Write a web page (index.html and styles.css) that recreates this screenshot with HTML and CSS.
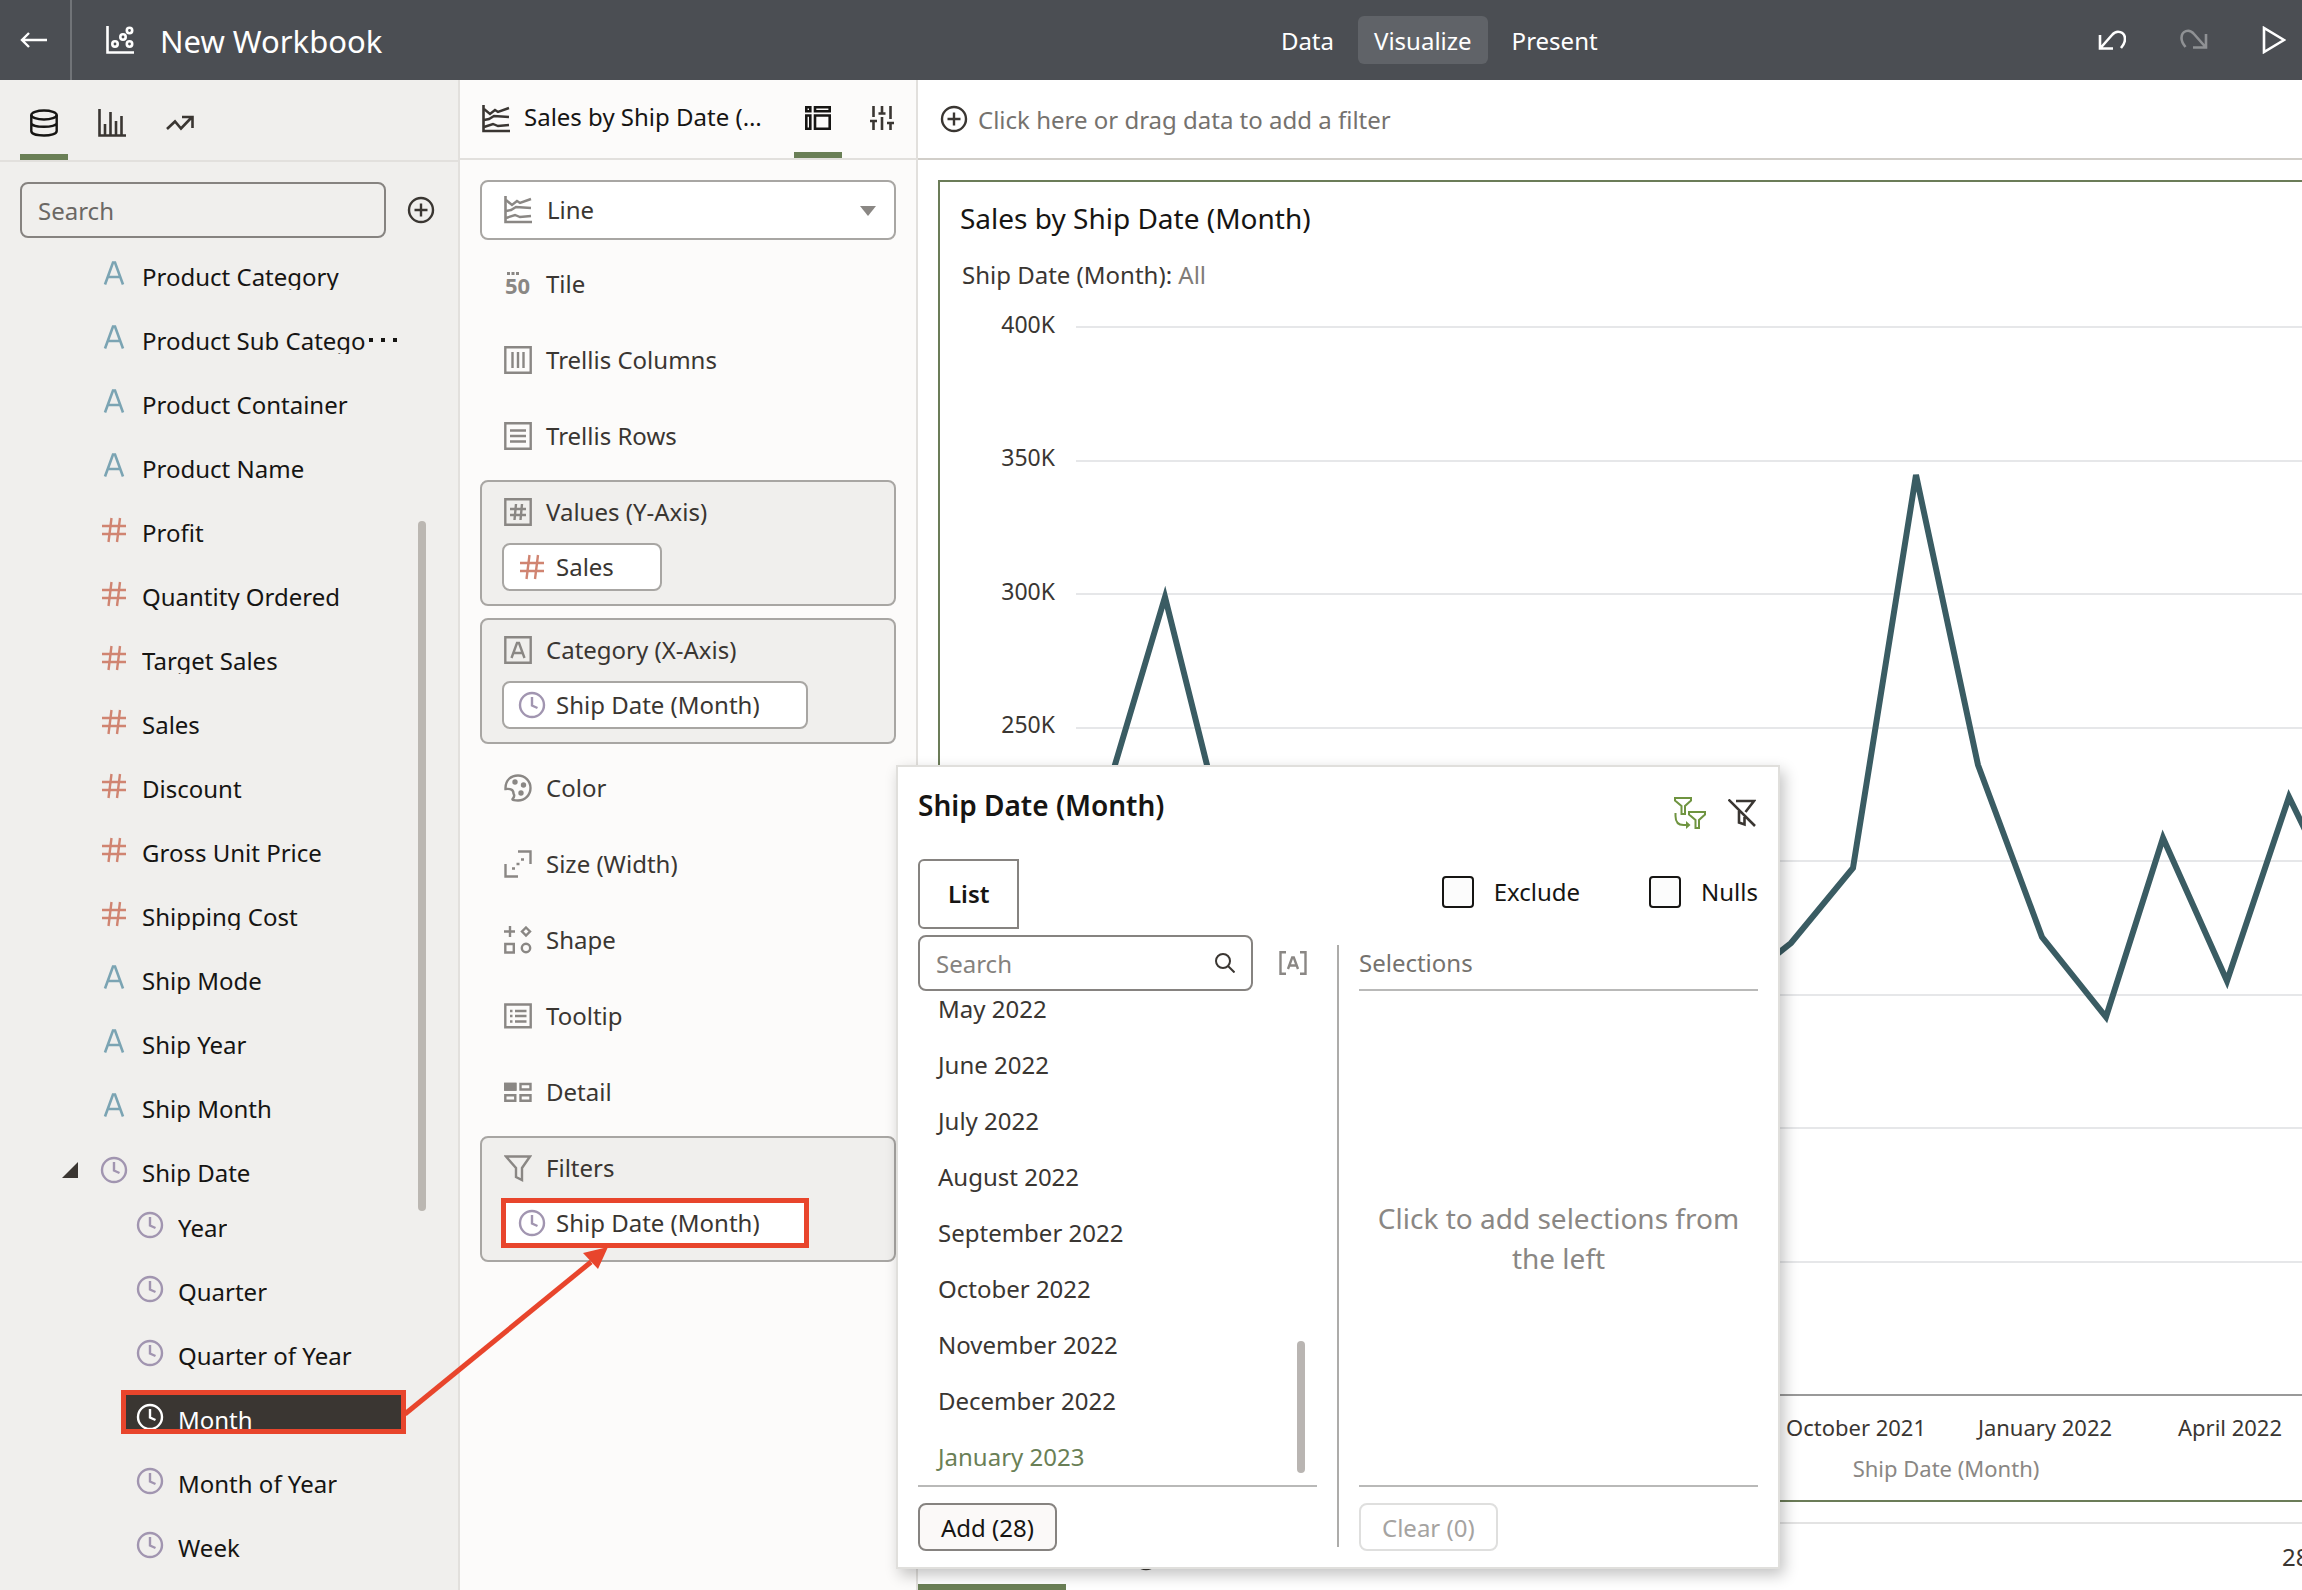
FILE: index.html
```html
<!DOCTYPE html>
<html lang="en">
<head>
<meta charset="utf-8">
<title>New Workbook</title>
<link rel="stylesheet" href="styles.css">
</head>
<body>
<svg class="sprite" aria-hidden="true">
  <symbol id="clock" viewBox="0 0 28 28"><circle cx="14" cy="14" r="12" fill="none" stroke="currentColor" stroke-width="2.4"/><path d="M14 6v8.500l5.500 2.500" fill="none" stroke="currentColor" stroke-width="2.400"/></symbol>
  <symbol id="attr" viewBox="0 0 28 28"><path d="M5 24.500L13 2.500h2L23 24.500M8 17h12" fill="none" stroke="currentColor" stroke-width="2.600"/></symbol>
  <symbol id="hash" viewBox="0 0 28 28"><path d="M2 10h24M2 18h24M11.500 2L8.500 26M20 2l-3 24" fill="none" stroke="currentColor" stroke-width="2.400"/></symbol>
  <symbol id="plus" viewBox="0 0 28 28"><circle cx="14" cy="14" r="12" fill="none" stroke="currentColor" stroke-width="2.400"/><path d="M14 7.500v13M7.500 14h13" stroke="currentColor" stroke-width="2.400"/></symbol>
  <symbol id="lines" viewBox="0 0 28 28"><path d="M1.500 0v26H28" fill="none" stroke="currentColor" stroke-width="2.600"/><path d="M2 4l6 5 5-4 3 2 11-4M2 15l5-1 5-3 15 1M2 22l9-3 5 2 11-1" fill="none" stroke="currentColor" stroke-width="2.400"/></symbol>
</svg>

<header class="topbar">
  <button class="topbar-back" aria-label="Back"><svg width="28" height="16" viewBox="0 0 28 16"><path d="M27 8H3M9 1L2 8l7 7" fill="none" stroke="currentColor" stroke-width="2.400"/></svg></button>
  <svg class="topbar-logo" width="28" height="28" viewBox="0 0 28 28" fill="none" stroke="currentColor" stroke-width="2.600"><path d="M1.500 0v26.500H28"/><circle cx="9" cy="18" r="2.700"/><circle cx="17" cy="11" r="2.700"/><circle cx="23.500" cy="4.500" r="2.700"/><circle cx="23.500" cy="18" r="2.700"/></svg>
  <h1 class="topbar-title">New Workbook</h1>
  <nav class="modes">
    <button class="mode">Data</button>
    <button class="mode mode--active">Visualize</button>
    <button class="mode">Present</button>
  </nav>
  <div class="topbar-actions">
    <button aria-label="Undo"><svg width="28" height="22" viewBox="0 0 28 22" fill="none" stroke="currentColor" stroke-width="2.600"><path d="M2 6v13.500h13M2.500 19L14 6c5-6 13-3 13 4 0 3-1.500 6-4 9"/></svg></button>
    <button class="is-off" aria-label="Redo"><svg width="28" height="22" viewBox="0 0 28 22" fill="none" stroke="currentColor" stroke-width="2.600"><path d="M26 5v13.500H13M25.500 18L14 5C9-1 1.500 2 1.500 9c0 3 1.500 6 4 9"/></svg></button>
    <button aria-label="Preview"><svg width="24" height="28" viewBox="0 0 24 28"><path d="M2 2v24L22 14z" fill="none" stroke="currentColor" stroke-width="2.600"/></svg></button>
  </div>
</header>

<div class="workspace">
  <aside class="data-panel">
    <div class="data-tabs">
      <button class="tab tab--active" aria-label="Data"><svg width="28" height="28" viewBox="0 0 28 28" fill="none" stroke="currentColor" stroke-width="2.400"><ellipse cx="14" cy="6" rx="12.700" ry="4.500"/><path d="M1.300 6v16c0 6 25.400 6 25.400 0V6M1.300 14c0 5 25.400 5 25.400 0"/></svg></button>
      <button class="tab" aria-label="Visualizations"><svg width="28" height="28" viewBox="0 0 28 28" fill="none" stroke="currentColor" stroke-width="2.600"><path d="M1.500 0v26.500H28M7 26V15M12.500 26V3M18 26V12M23.500 26V7"/></svg></button>
      <button class="tab" aria-label="Analytics"><svg width="28" height="28" viewBox="0 0 28 28" fill="none" stroke="currentColor" stroke-width="2.600"><path d="M1 20l8-7.500 6 7L26 8M16 8h10.500v11"/></svg></button>
    </div>
    <div class="data-search">
      <input class="field" type="text" placeholder="Search" aria-label="Search data">
      <button aria-label="Add data"><svg width="28" height="28"><use href="#plus"/></svg></button>
    </div>
    <ul class="tree">
      <li class="tree-row"><svg class="ic attr"><use href="#attr"/></svg><span class="tree-label">Product Category</span></li>
      <li class="tree-row"><svg class="ic attr"><use href="#attr"/></svg><span class="tree-label">Product Sub Catego</span><svg class="more" viewBox="0 0 30 4"><path d="M1 0h4v4H1zM13 0h4v4h-4zM25 0h4v4h-4z" fill="currentColor"/></svg></li>
      <li class="tree-row"><svg class="ic attr"><use href="#attr"/></svg><span class="tree-label">Product Container</span></li>
      <li class="tree-row"><svg class="ic attr"><use href="#attr"/></svg><span class="tree-label">Product Name</span></li>
      <li class="tree-row"><svg class="ic meas"><use href="#hash"/></svg><span class="tree-label">Profit</span></li>
      <li class="tree-row"><svg class="ic meas"><use href="#hash"/></svg><span class="tree-label">Quantity Ordered</span></li>
      <li class="tree-row"><svg class="ic meas"><use href="#hash"/></svg><span class="tree-label">Target Sales</span></li>
      <li class="tree-row"><svg class="ic meas"><use href="#hash"/></svg><span class="tree-label">Sales</span></li>
      <li class="tree-row"><svg class="ic meas"><use href="#hash"/></svg><span class="tree-label">Discount</span></li>
      <li class="tree-row"><svg class="ic meas"><use href="#hash"/></svg><span class="tree-label">Gross Unit Price</span></li>
      <li class="tree-row"><svg class="ic meas"><use href="#hash"/></svg><span class="tree-label">Shipping Cost</span></li>
      <li class="tree-row"><svg class="ic attr"><use href="#attr"/></svg><span class="tree-label">Ship Mode</span></li>
      <li class="tree-row"><svg class="ic attr"><use href="#attr"/></svg><span class="tree-label">Ship Year</span></li>
      <li class="tree-row"><svg class="ic attr"><use href="#attr"/></svg><span class="tree-label">Ship Month</span></li>
      <li>
        <div class="tree-row tree-row--open"><svg class="twisty" viewBox="0 0 16 16"><path d="M16 0v16H0z" fill="currentColor"/></svg><svg class="ic time"><use href="#clock"/></svg><span class="tree-label">Ship Date</span></div>
        <ul class="subtree">
          <li class="subrow"><svg class="ic time"><use href="#clock"/></svg><span class="tree-label">Year</span></li>
          <li class="subrow"><svg class="ic time"><use href="#clock"/></svg><span class="tree-label">Quarter</span></li>
          <li class="subrow"><svg class="ic time"><use href="#clock"/></svg><span class="tree-label">Quarter of Year</span></li>
          <li class="subrow subrow--selected"><svg class="ic time"><use href="#clock"/></svg><span class="tree-label">Month</span></li>
          <li class="subrow"><svg class="ic time"><use href="#clock"/></svg><span class="tree-label">Month of Year</span></li>
          <li class="subrow"><svg class="ic time"><use href="#clock"/></svg><span class="tree-label">Week</span></li>
        </ul>
      </li>
    </ul>
    <div class="tree-thumb"></div>
  </aside>

  <section class="grammar">
    <div class="grammar-head">
      <svg width="28" height="28"><use href="#lines"/></svg>
      <h2 class="grammar-title">Sales by Ship Date (Month)</h2>
      <button class="tab tab--active" aria-label="Grammar"><svg width="28" height="28" viewBox="0 0 28 28" fill="none" stroke="currentColor" stroke-width="2.600"><path d="M2.300 3.300h4v4h-4zM11 3.300h14.700v4H11zM2.300 11.500h4v13.200h-4zM11 11.500h14.700v13.200H11z"/></svg></button>
      <button class="tab tab--plain" aria-label="Properties"><svg width="24" height="24" viewBox="0 0 24 24" fill="none" stroke="currentColor" stroke-width="2.600"><path d="M3.500 0v11M12 0v7M20.500 0v13M3.500 14v10M12 11v13M20.500 17v7M0 15h7M8.500 7.500h7M17 17h7"/></svg></button>
    </div>
    <div class="grammar-body">
      <div class="viz-type">
        <svg class="viz-icon" width="28" height="28"><use href="#lines"/></svg>
        <select class="viz-select" aria-label="Visualization type"><option>Line</option></select>
        <svg class="viz-caret" viewBox="0 0 16 10"><path d="M0 0h16L8 10z" fill="currentColor"/></svg>
      </div>
      <div class="slot"><div class="slot-label"><svg class="ic" viewBox="0 0 28 28"><path d="M3 2h3v3H3zM7.500 2h3v3h-3zM12 2h3v3h-3z" fill="currentColor"/><text x="1" y="24" class="fifty">50</text></svg>Tile</div></div>
      <div class="slot"><div class="slot-label"><svg class="ic line-ic" viewBox="0 0 28 28"><path d="M1.300 1.300h25.400v25.400H1.300zM8.500 6v16M14 6v16M19.500 6v16"/></svg>Trellis Columns</div></div>
      <div class="slot"><div class="slot-label"><svg class="ic line-ic" viewBox="0 0 28 28"><path d="M1.300 1.300h25.400v25.400H1.300zM6 8.500h16M6 14h16M6 19.500h16"/></svg>Trellis Rows</div></div>
      <div class="slot slot--filled">
        <div class="slot-label"><svg class="ic line-ic" viewBox="0 0 28 28"><path d="M1.300 1.300h25.400v25.400H1.300zM6 11h16M6 17h16M12 6l-1.500 16M18 6l-1.500 16"/></svg>Values (Y-Axis)</div>
        <button class="pill"><svg class="ic meas"><use href="#hash"/></svg>Sales</button>
      </div>
      <div class="slot slot--filled">
        <div class="slot-label"><svg class="ic line-ic" viewBox="0 0 28 28"><path d="M1.300 1.300h25.400v25.400H1.300zM7.500 22L13 7h2l5.500 15M10 17h8"/></svg>Category (X-Axis)</div>
        <button class="pill"><svg class="ic time"><use href="#clock"/></svg>Ship Date (Month)</button>
      </div>
      <div class="slot"><div class="slot-label"><svg class="ic" viewBox="0 0 28 28"><path d="M1.500 14C1.500 6 7 1.500 14 1.500S26.500 7 26.500 14 21 26.500 14 26.500c-3 0-6-.5-5.500-1.500 2-2 2-4 1-5.500 0-4-3-5-8-4.500z" fill="none" stroke="currentColor" stroke-width="2.400"/><circle cx="11" cy="8" r="2.700" fill="currentColor"/><circle cx="19.500" cy="11" r="2.700" fill="currentColor"/><circle cx="17" cy="19" r="2.700" fill="currentColor"/></svg>Color</div></div>
      <div class="slot"><div class="slot-label"><svg class="ic line-ic" viewBox="0 0 28 28"><path d="M14 1.500h12.500V14M1.500 14v12.500H14"/><path d="M8 18.500h3M12.500 14h3M17 9.500h3"/></svg>Size (Width)</div></div>
      <div class="slot"><div class="slot-label"><svg class="ic line-ic" viewBox="0 0 28 28"><path d="M6 0v11M0 5.500h11M22 1.500l4 4-4 4-4-4zM1.300 18h8.500v8.500H1.300z"/><circle cx="22" cy="22" r="4.200"/></svg>Shape</div></div>
      <div class="slot"><div class="slot-label"><svg class="ic line-ic" viewBox="0 0 28 28"><path d="M1.300 2.500h25.400v22.800H1.300zM6 9h2.500M11 9h11.500M6 14h2.500M11 14h11.500M6 19.500h2.500M11 19.500h11.500"/></svg>Tooltip</div></div>
      <div class="slot"><div class="slot-label"><svg class="ic line-ic" viewBox="0 0 28 28"><path d="M1.300 6h10v5.500h-10zM16.500 6h10v5.500h-10zM1.300 17.200h10v5.500h-10zM16.500 17.200h10v5.500h-10z"/><path d="M1.300 6h10v5.500h-10z" fill="currentColor"/></svg>Detail</div></div>
      <div class="slot slot--filled">
        <div class="slot-label"><svg class="ic line-ic" viewBox="0 0 28 28"><path d="M2 2.500h24l-8 11.500v12l-6-3v-9z"/></svg>Filters</div>
        <button class="pill pill--marked"><svg class="ic time"><use href="#clock"/></svg>Ship Date (Month)</button>
      </div>
    </div>
  </section>

  <main class="canvas">
    <button class="filter-bar"><svg width="28" height="28"><use href="#plus"/></svg><span>Click here or drag data to add a filter</span></button>
    <div class="canvas-body">
      <article class="chart-card">
        <h2 class="chart-title">Sales by Ship Date (Month)</h2>
        <p class="chart-sub">Ship Date (Month): <span>All</span></p>
        <svg class="chart" width="100%" height="1196" role="img" aria-label="Sales by month line chart">
          <g class="gridlines">
            <line x1="136" x2="100%" y1="21" y2="21"/><line x1="136" x2="100%" y1="155" y2="155"/><line x1="136" x2="100%" y1="288" y2="288"/><line x1="136" x2="100%" y1="422" y2="422"/><line x1="136" x2="100%" y1="555" y2="555"/><line x1="136" x2="100%" y1="689" y2="689"/><line x1="136" x2="100%" y1="822" y2="822"/><line x1="136" x2="100%" y1="956" y2="956"/>
          </g>
          <line class="axis" x1="136" x2="100%" y1="1089" y2="1089"/>
          <g class="tick tick--y"><text x="115" y="27">400K</text><text x="115" y="160">350K</text><text x="115" y="294">300K</text><text x="115" y="427">250K</text></g>
          <g class="tick tick--x"><text x="916" y="1130">October 2021</text><text x="1105" y="1130">January 2022</text><text x="1290" y="1130">April 2022</text></g>
          <text class="axis-title" x="1006" y="1171">Ship Date (Month)</text>
          <polyline class="series" points="163,499 225,291 287,539 349,600 790,686 851,637 913,562 976,169 1038,459 1102,631 1166,711 1223,532 1287,675 1349,491 1412,620"/>
        </svg>
      </article>
    </div>
    <footer class="canvas-tabs">
      <button class="canvas-tab" aria-label="Canvas 1"></button>
      <button class="canvas-add" aria-label="Add canvas"><svg width="28" height="28"><use href="#plus"/></svg></button>
      <span class="row-count">28 Rows</span>
    </footer>
  </main>
</div>

<section class="popup" role="dialog" aria-labelledby="popup-title">
  <div class="popup-head">
    <h2 class="popup-title" id="popup-title">Ship Date (Month)</h2>
    <div class="popup-tools">
      <button class="limit" aria-label="Limit values"><svg width="32" height="32" viewBox="0 0 32 32" fill="none" stroke="currentColor" stroke-width="2"><path d="M1 1h16v2.500L11 9v8H7.500V9L1 3.500zM15 15h16v2.500L25 23v8h-3.500v-8L15 17.500zM1.500 16v3c0 6 3 9 8 9h4"/><path d="M12 24l4.500 4-4.500 4z" fill="currentColor" stroke="none"/></svg></button>
      <button aria-label="Clear filter"><svg width="28" height="28" viewBox="0 0 28 28" fill="none" stroke="currentColor" stroke-width="2.600"><path d="M.5.500L27 27M8 2h18l-8.500 11M11 12v11.500l5.500 2V18"/></svg></button>
    </div>
  </div>
  <div class="popup-mode">
    <button class="list-tab">List</button>
    <label class="check"><input type="checkbox">Exclude</label>
    <label class="check"><input type="checkbox">Nulls</label>
  </div>
  <div class="popup-cols">
    <div class="col">
      <div class="col-search">
        <div class="search-wrap">
          <input class="field" type="text" placeholder="Search" aria-label="Search values">
          <svg class="lens" viewBox="0 0 20 20" fill="none" stroke="currentColor" stroke-width="2"><circle cx="8" cy="8" r="7"/><path d="M13 13l6.500 6.500"/></svg>
        </div>
        <button class="match" aria-label="Match case"><svg width="28" height="24" viewBox="0 0 28 24" fill="none" stroke="currentColor" stroke-width="2.400"><path d="M7 1.200H1.500v21.600H7M21 1.200h5.500v21.600H21M9 18l4.200-11.500h1.600L19 18M11 14.500h6"/></svg></button>
      </div>
      <ul class="values">
        <li>May 2022</li><li>June 2022</li><li>July 2022</li><li>August 2022</li><li>September 2022</li><li>October 2022</li><li>November 2022</li><li>December 2022</li><li class="out">January 2023</li>
      </ul>
      <div class="values-thumb"></div>
      <button class="btn">Add (28)</button>
    </div>
    <div class="divider"></div>
    <div class="col">
      <h3 class="sel-head">Selections</h3>
      <div class="sel-empty">Click to add selections from the left</div>
      <button class="btn" disabled>Clear (0)</button>
    </div>
  </div>
</section>

<svg class="callout" width="220" height="180" viewBox="0 0 220 180" aria-hidden="true"><path d="M4 174L190 22" stroke="#e8452c" stroke-width="5"/><path d="M207 7l-10 22-15-16z" fill="#e8452c"/></svg>
</body>
</html>
```
FILE: styles.css
```css
* { box-sizing: border-box; margin: 0; padding: 0; }

body {
  position: relative;
  display: flex;
  flex-direction: column;
  height: 100vh;
  overflow: hidden;
  background: #fff;
  color: #161513;
  font: 24px/32px "Noto Sans", sans-serif;
}

button, input, select { font: inherit; color: inherit; }
button { display: flex; align-items: center; background: none; border: 0; white-space: nowrap; }
h1, h2, h3 { font-weight: 400; font-size: inherit; }
ul { list-style: none; }
svg { flex: none; display: block; }
.sprite { position: absolute; width: 0; height: 0; }
.ic { width: 28px; height: 28px; }
.attr { color: #7ba4b3; }
.meas { color: #d08471; }
.time { color: #a195b0; }

/* Top bar */
.topbar {
  flex: none;
  display: grid;
  grid-template-columns: 72px 28px 22fr auto 13fr;
  align-items: center;
  height: 80px;
  background: #4b4e53;
  color: #fff;
}
.topbar-back { height: 80px; padding-left: 20px; border-right: 2px solid #717478; }
.topbar-logo { margin-left: 34px; }
.topbar-title { padding: 2px 0 0 60px; font-size: 31px; line-height: 44px; }
.modes { display: flex; gap: 8px; }
.mode { height: 48px; padding: 2px 16px 0; border-radius: 6px; }
.mode--active { background: #606368; }
.topbar-actions { display: flex; justify-content: flex-end; align-items: center; gap: 54px; padding-right: 16px; }
.is-off { color: #8f9194; }

.workspace { flex: 1; min-height: 0; display: grid; grid-template-columns: 460px 458px minmax(0, 1fr); }

/* Data panel */
.data-panel { position: relative; overflow: hidden; background: #f0efed; border-right: 2px solid #e2e0dd; }
.data-tabs { display: flex; gap: 20px; height: 82px; padding-left: 20px; border-bottom: 2px solid #e2e0dd; }
.tab { justify-content: center; width: 48px; height: 80px; padding-top: 12px; color: #3a3632; border-bottom: 6px solid transparent; }
.tab--active { color: #161513; border-color: #6a7f56; }
.data-search { display: flex; align-items: center; gap: 21px; padding: 20px 23px 0 20px; color: #3a3632; }
.field {
  flex: 1;
  min-width: 0;
  width: 100%;
  height: 56px;
  padding: 0 16px;
  background: transparent;
  border: 2px solid #868380;
  border-radius: 8px;
}
.field::placeholder { color: #6b6864; opacity: 1; }
.tree { margin-top: 4px; }
.tree-row { display: flex; align-items: center; gap: 14px; height: 64px; padding-left: 100px; }
.tree-row--open { padding-left: 62px; }
.twisty { width: 16px; height: 16px; margin-right: 8px; color: #3a3632; }
.tree-label { padding-top: 6px; overflow: hidden; line-height: 26px; white-space: nowrap; }
.more { width: 30px; height: 4px; margin: 4px 0 0 -12px; }
.subtree { display: flex; flex-direction: column; gap: 20px; margin: -4px 52px 0 121px; }
.subrow {
  display: flex;
  align-items: center;
  gap: 14px;
  height: 44px;
  padding: 10px 0 0 10px;
  border: 5px solid transparent;
}
.subrow--selected { overflow: hidden; background: #3a3632; border-color: #e8452c; color: #fff; }
.subrow--selected .time { color: #fff; }
.tree-thumb { position: absolute; right: 32px; top: 441px; width: 8px; height: 690px; border-radius: 4px; background: #bbb7b2; }

/* Grammar panel */
.grammar { background: #fcfbfa; border-right: 2px solid #e2e0dd; }
.grammar-head { display: flex; align-items: center; height: 80px; padding: 0 20px 0 22px; border-bottom: 2px solid #e2e0dd; color: #3a3632; }
.grammar-title { width: 242px; margin: 0 28px 0 14px; padding-bottom: 4px; overflow: hidden; text-overflow: ellipsis; white-space: nowrap; color: #161513; }
.grammar-head .tab { height: 78px; padding-top: 4px; }
.grammar-head .tab--plain { width: 24px; margin-left: 28px; }
.grammar-body { display: flex; flex-direction: column; gap: 12px; padding: 20px; }
.viz-type { position: relative; color: #8a8784; }
.viz-select {
  appearance: none;
  display: block;
  width: 100%;
  height: 60px;
  padding: 0 65px;
  background: #fff;
  border: 2px solid #a8a6a3;
  border-radius: 8px;
  color: #3a3632;
}
.viz-icon { position: absolute; left: 24px; top: 16px; }
.viz-caret { position: absolute; right: 20px; top: 26px; width: 16px; height: 10px; }
.slot { padding: 14px 20px; border: 2px solid transparent; border-radius: 8px; }
.slot--filled { padding-bottom: 13px; background: #f0efed; border-color: #a8a6a3; }
.slot-label { display: flex; align-items: center; gap: 14px; padding-left: 2px; color: #3a3632; }
.slot-label .ic { color: #8a8784; }
.line-ic { fill: none; stroke: currentColor; stroke-width: 2.4px; }
.fifty { font: 700 22px "Noto Sans", sans-serif; fill: currentColor; }
.pill {
  gap: 10px;
  height: 48px;
  margin-top: 15px;
  padding: 0 46px 0 14px;
  background: #fff;
  border: 2px solid #a8a6a3;
  border-radius: 8px;
  color: #3a3632;
}
.pill--marked { border-color: #e8452c; border-radius: 0; outline: 5px solid #e8452c; outline-offset: -4px; }

/* Canvas */
.canvas { display: flex; flex-direction: column; min-width: 0; overflow: hidden; }
.filter-bar { flex: none; gap: 10px; height: 80px; padding-left: 22px; border-bottom: 2px solid #d1cec9; color: #75726e; }
.filter-bar svg { color: #3a3632; }
.filter-bar span { padding-top: 2px; }
.canvas-body { flex: 1; min-height: 0; padding: 20px 0 20px 20px; }
.chart-card { height: 100%; overflow: hidden; border: 2px solid #6b7c58; border-right: 0; }
.chart-title { padding: 16px 0 0 20px; font-size: 28px; line-height: 40px; }
.chart-sub { padding: 21px 0 15px 22px; color: #3a3632; }
.chart-sub span { color: #7f7c78; }
.gridlines { stroke: #e6e7e9; stroke-width: 2px; }
.axis { stroke: #999; stroke-width: 2px; }
.tick { font-size: 22px; fill: #3a3632; }
.tick--y { font-size: 23px; text-anchor: end; }
.tick--x { text-anchor: middle; }
.axis-title { font-size: 22px; fill: #8a8784; text-anchor: middle; }
.series { fill: none; stroke: #3a5c63; stroke-width: 6px; }
.canvas-tabs { flex: none; display: flex; align-items: center; height: 68px; border-top: 2px solid #e3e3e3; color: #3a3632; }
.canvas-tab { align-self: stretch; width: 148px; border-bottom: 6px solid #6a7f56; }
.canvas-add { margin-left: 66px; }
.row-count { width: 20px; margin-left: auto; overflow: hidden; white-space: nowrap; }

/* Filter popup */
.popup {
  position: absolute;
  left: 896px;
  top: 765px;
  width: 884px;
  padding: 18px 20px 16px;
  background: #fff;
  border: 2px solid #e0dfdc;
  box-shadow: 4px 6px 14px rgba(0, 0, 0, .24);
}
.popup-head { display: flex; justify-content: space-between; height: 44px; }
.popup-title { font-size: 28px; line-height: 40px; font-weight: 600; }
.popup-tools { display: flex; align-items: center; gap: 22px; padding: 12px 2px 0 0; color: #3a3632; }
.limit { color: #6f9440; }
.popup-mode { display: flex; align-items: flex-start; margin: 30px 0 6px; }
.list-tab { height: 70px; margin-right: auto; padding: 0 28px; border: 2px solid #868380; border-radius: 6px 0 0 6px; font-weight: 600; }
.check { display: flex; align-items: center; gap: 20px; margin: 17px 0 0 69px; }
.check input { appearance: none; width: 32px; height: 32px; background: #fcfcfc; border: 2px solid #161513; border-radius: 4px; }
.popup-cols { display: grid; grid-template-columns: 1fr 2px 1fr; gap: 20px; }
.col { position: relative; display: flex; flex-direction: column; align-items: flex-start; }
.col-search { display: flex; align-items: center; align-self: stretch; gap: 26px; padding-right: 10px; }
.search-wrap { position: relative; flex: 1; }
.search-wrap .field { display: block; }
.search-wrap .field::placeholder { color: #85827e; }
.lens { position: absolute; right: 18px; top: 18px; width: 20px; height: 20px; color: #3a3632; }
.match { color: #8a8784; }
.values {
  display: flex;
  flex-direction: column;
  justify-content: flex-end;
  align-self: stretch;
  height: 496px;
  overflow: hidden;
  border-bottom: 2px solid #b9b9b8;
  color: #3a3632;
}
.values li { flex: none; padding: 12px 20px; }
.values .out { color: #6a7f56; }
.values-thumb { position: absolute; right: 12px; top: 406px; width: 8px; height: 132px; border-radius: 4px; background: #b9b5b2; }
.btn { height: 48px; margin-top: 16px; padding: 2px 21px 0; background: #fbf9f8; border: 2px solid #868380; border-radius: 8px; }
.btn:disabled { background: #fff; border-color: #dfdfde; color: #a5a3a1; }
.divider { margin: 10px 0 4px; background: #adacaa; }
.sel-head { align-self: stretch; padding: 12px 0 10px; border-bottom: 2px solid #b9b9b8; color: #75726e; }
.sel-empty {
  flex: 1;
  display: flex;
  align-items: center;
  align-self: stretch;
  border-bottom: 2px solid #b9b9b8;
  color: #8a8784;
  font-size: 28px;
  line-height: 40px;
  text-align: center;
}

/* Callout arrow drawn over both panels */
.callout { position: absolute; left: 401px; top: 1240px; }
```
